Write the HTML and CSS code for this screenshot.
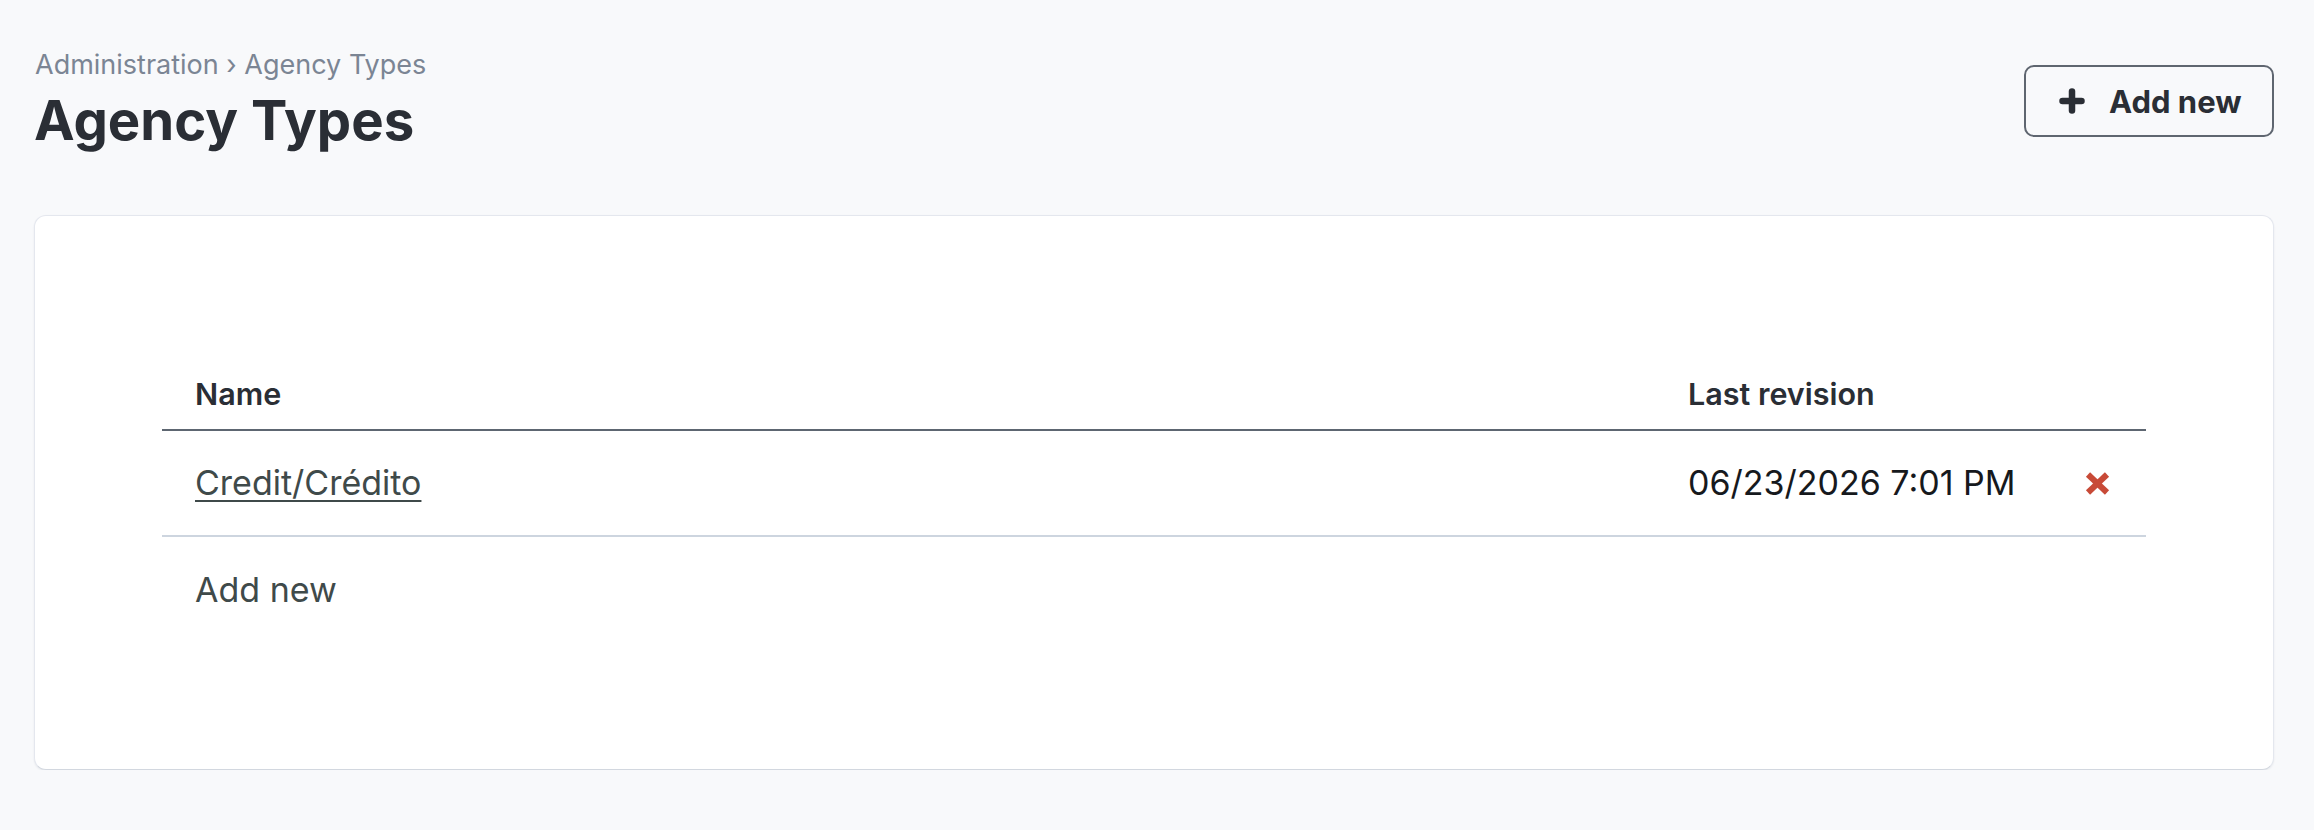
FILE: index.html
```html
<!DOCTYPE html>
<html lang="en">
<head>
    <meta charset="UTF-8">
    <title>Agency Types</title>
    <link rel="stylesheet" href="styles.css">
</head>
<body>

    <div class="page-header">
        <div class="heading">
            <div class="breadcrumb">Administration › Agency Types</div>
            <h1>Agency Types</h1>
        </div>
        <button class="add-btn">
            <svg class="plus" width="26" height="26" viewBox="0 0 26 26">
                <line x1="13" y1="3.5" x2="13" y2="22.5" />
                <line x1="3.5" y1="13" x2="22.5" y2="13" />
            </svg>
            <span>Add new</span>
        </button>
    </div>

    <div class="card">
        <table class="list">
            <colgroup>
                <col>
                <col class="col-date">
                <col class="col-action">
            </colgroup>
            <thead>
                <tr>
                    <th>Name</th>
                    <th>Last revision</th>
                    <th></th>
                </tr>
            </thead>
            <tbody>
                <tr>
                    <td><a href="#">Credit/Crédito</a></td>
                    <td class="date">06/23/2026 7:01 PM</td>
                    <td class="action">
                        <svg class="remove" width="25" height="23" viewBox="0 0 25 23">
                            <line x1="3" y1="2.5" x2="22" y2="20.5" />
                            <line x1="22" y1="2.5" x2="3" y2="20.5" />
                        </svg>
                    </td>
                </tr>
                <tr class="add-row">
                    <td colspan="3">Add new</td>
                </tr>
            </tbody>
        </table>
    </div>

</body>
</html>
```

FILE: styles.css
```css
body {
    font-family: Inter, "Noto Sans", sans-serif;
    background: #f8f9fb;
    color: #2a2e35;
    margin: 0;
    padding: 0 40px 0 34px;
}

.page-header {
    display: flex;
    justify-content: space-between;
    align-items: center;
    padding-top: 49px;
}

.breadcrumb {
    font-size: 27px;
    line-height: 32px;
    color: #7b8594;
    padding-left: 1px;
}

h1 {
    font-size: 54.5px;
    line-height: 65px;
    font-weight: 700;
    margin: 7px 0 0;
    color: #2a2e35;
}

.add-btn {
    display: flex;
    align-items: center;
    gap: 24px;
    height: 72px;
    width: 250px;
    padding: 0 33px;
    background: transparent;
    border: 2px solid #5f6670;
    border-radius: 10px;
    font-family: inherit;
    font-size: 31px;
    font-weight: 700;
    color: #2a2e35;
    white-space: nowrap;
    cursor: pointer;
}

.plus {
    flex-shrink: 0;
}

.plus line {
    stroke: #2a2e35;
    stroke-width: 6.5;
    stroke-linecap: round;
}

.card {
    margin-top: 62px;
    background: #fff;
    border: 1px solid #e4e7ee;
    border-bottom-color: #d2d7df;
    border-radius: 12px;
    box-shadow: 0 1px 2px rgba(30, 40, 60, 0.08);
    padding: 127px 127px 127px;
}

.list {
    width: 100%;
    border-collapse: collapse;
    table-layout: fixed;
}

.col-date {
    width: 397px;
}

.col-action {
    width: 94px;
}

.list th {
    text-align: left;
    font-size: 30.5px;
    font-weight: 600;
    line-height: 34px;
    padding: 34px 33px 18px;
    border-bottom: 2px solid #5d6671;
    color: #2a2e35;
}

.list td {
    font-size: 34px;
    line-height: 34px;
    padding: 35px 33px;
    border-bottom: 2px solid #cdd5df;
    color: #3f4a4a;
}

.list td a {
    color: #3f4a4a;
    text-decoration: underline;
    text-underline-offset: 5px;
    text-decoration-thickness: 2px;
}

.list td.date {
    color: #16191d;
}

.list td.action {
    text-align: right;
    padding-right: 36px;
    vertical-align: middle;
}

.remove {
    display: block;
    margin-left: auto;
}

.remove line {
    stroke: #c84a37;
    stroke-width: 6;
}

.list .add-row td {
    border-bottom: none;
    padding: 36px 33px 35px;
}
```
